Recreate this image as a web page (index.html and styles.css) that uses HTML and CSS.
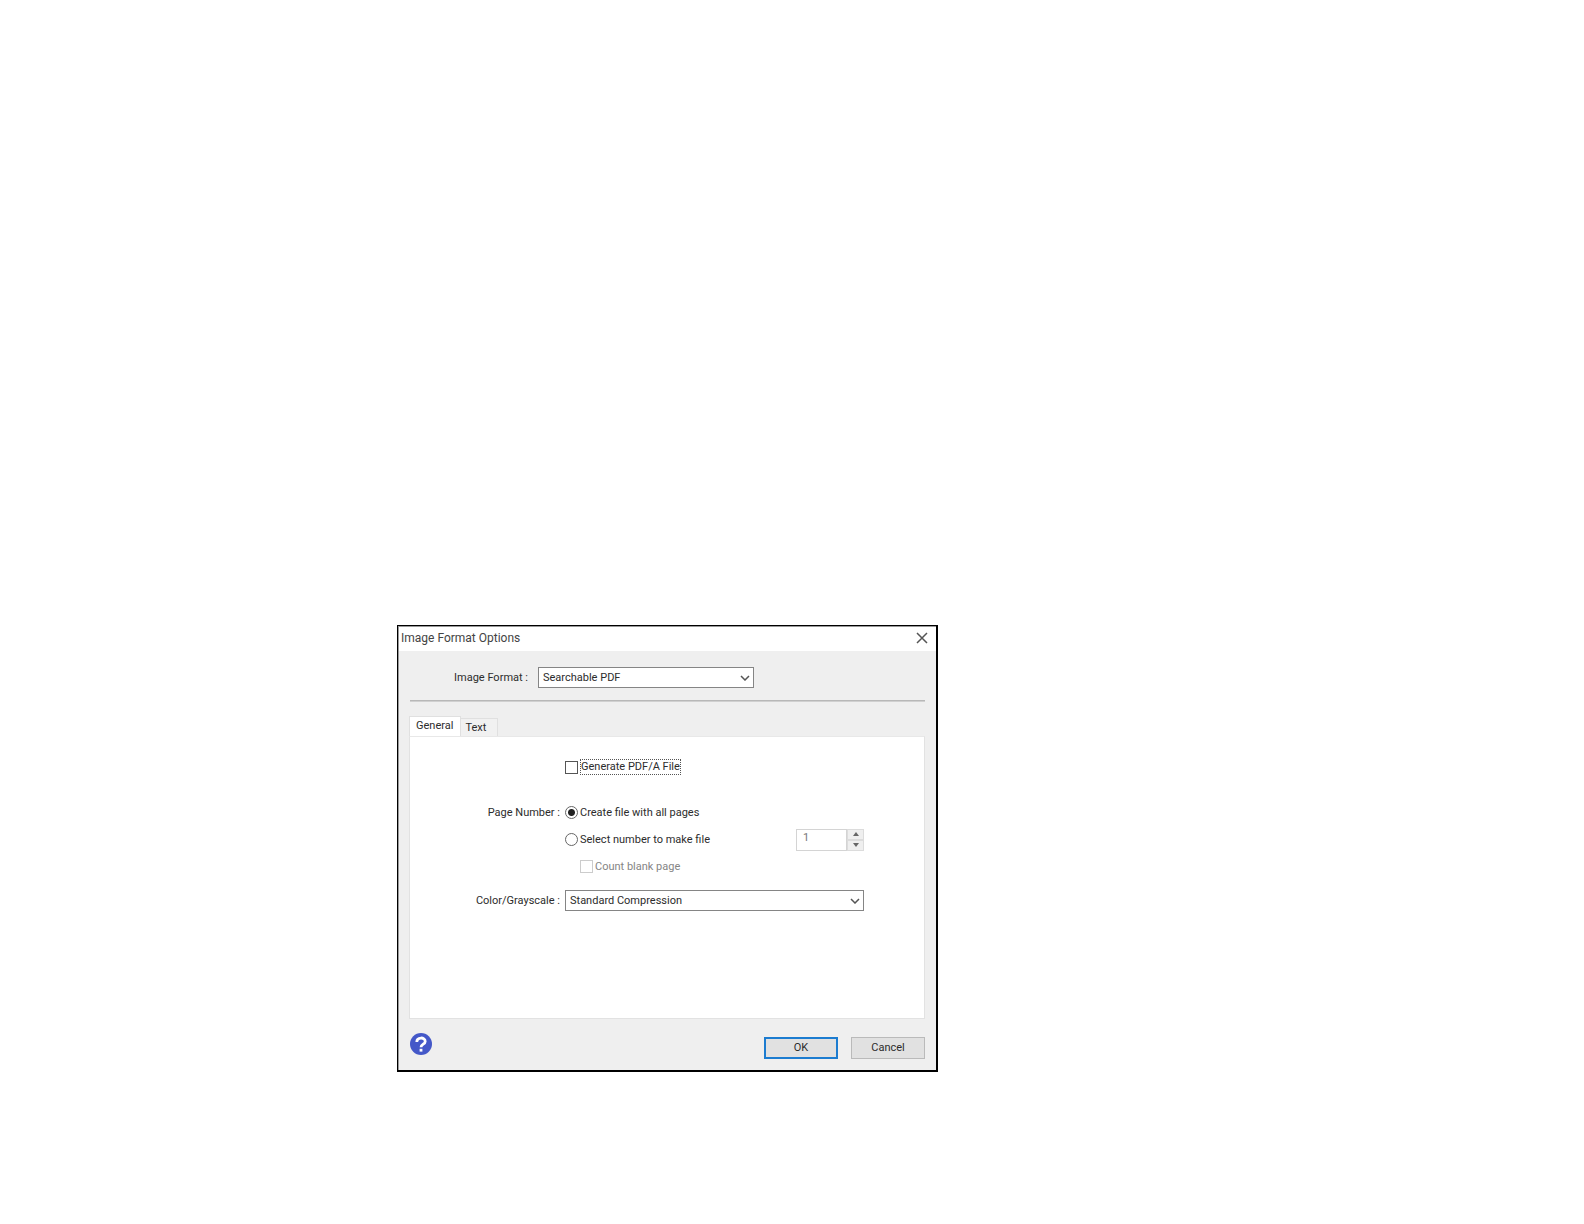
FILE: index.html
```html
<!DOCTYPE html>
<html lang="en">
<head>
<meta charset="utf-8">
<title>Image Format Options</title>
<link rel="stylesheet" href="styles.css">
</head>
<body>
<main class="page">
  <form class="dialog" role="dialog" aria-labelledby="dialog-title">
    <header class="titlebar">
      <h1 class="title" id="dialog-title">Image Format Options</h1>
      <button class="close" type="button" aria-label="Close">
        <svg width="12" height="12" viewBox="0 0 12 12"><path d="M1 1 11 11M11 1 1 11"/></svg>
      </button>
    </header>

    <div class="body">
      <div class="format-row">
        <label class="format-label" for="format">Image Format :</label>
        <div class="dropdown">
          <select id="format"><option>Searchable PDF</option></select>
          <svg class="chevron" width="10" height="6" viewBox="0 0 10 6"><path d="M1 1 5 5 9 1"/></svg>
        </div>
      </div>
      <hr class="divider">

      <div class="tabs" role="tablist">
        <button class="tab active" type="button" role="tab" aria-selected="true">General</button>
        <button class="tab" type="button" role="tab" aria-selected="false">Text</button>
      </div>

      <section class="panel" role="tabpanel">
        <div class="row row-pdfa">
          <span></span>
          <div class="option">
            <input class="check" type="checkbox" id="pdfa">
            <label class="focused" for="pdfa">Generate PDF/A File</label>
          </div>
        </div>
        <div class="row">
          <span class="row-label">Page Number :</span>
          <div class="option">
            <input class="radio" type="radio" name="pages" id="all" checked>
            <label for="all">Create file with all pages</label>
          </div>
        </div>
        <div class="row">
          <span></span>
          <div class="option">
            <input class="radio" type="radio" name="pages" id="some">
            <label for="some">Select number to make file</label>
            <div class="spinner">
              <input class="spin-value" type="text" value="1" aria-label="Number of pages" disabled>
              <button class="spin" type="button" aria-label="Increase" disabled><svg width="6" height="4" viewBox="0 0 6 4"><path d="M0 4 3 0 6 4Z"/></svg></button>
              <button class="spin" type="button" aria-label="Decrease" disabled><svg width="6" height="4" viewBox="0 0 6 4"><path d="M0 0 3 4 6 0Z"/></svg></button>
            </div>
          </div>
        </div>
        <div class="row">
          <span></span>
          <div class="option nested">
            <input class="check" type="checkbox" id="blank" disabled>
            <label for="blank">Count blank page</label>
          </div>
        </div>
        <div class="row row-color">
          <label class="row-label" for="color">Color/Grayscale :</label>
          <div class="dropdown">
            <select id="color"><option>Standard Compression</option></select>
            <svg class="chevron" width="10" height="6" viewBox="0 0 10 6"><path d="M1 1 5 5 9 1"/></svg>
          </div>
        </div>
      </section>

      <footer class="footer">
        <button class="help" type="button" aria-label="Help">
          <svg width="22" height="22" viewBox="0 0 22 22"><circle cx="11" cy="11" r="11" fill="#4458c8"/><path d="M6.8 9C6.8 3.8 15.2 3.8 15.2 8.4 15.2 11.2 11 11 11 14.2" fill="none" stroke="#fff" stroke-width="2.8"/><rect x="9.6" y="15.8" width="2.8" height="2.8" fill="#fff"/></svg>
        </button>
        <button class="button default" type="submit">OK</button>
        <button class="button" type="button">Cancel</button>
      </footer>
    </div>
  </form>
</main>
</body>
</html>
```
FILE: styles.css
```css
* { box-sizing: border-box; }

body {
  margin: 0;
  background: #fff;
  color: #2c2c2c;
  font: 11px/16px Roboto, "Open Sans", sans-serif;
}

button, input, select {
  margin: 0;
  padding: 0;
  border: 0;
  color: inherit;
  font: inherit;
}

svg { display: block; }

.page { padding: 625px 16px 152px 397px; }

.dialog {
  max-width: 541px;
  padding: 1px 0 0 1px;
  border: solid #000;
  border-width: 1px 2px 2px 1px;
  background: #999;
}

.titlebar {
  display: flex;
  align-items: center;
  justify-content: space-between;
  height: 24px;
  padding: 0 8px 2px 2px;
  background: #fff;
}

.title {
  margin: 0;
  color: #444;
  font-size: 12px;
  font-weight: 400;
}

.close { background: none; }

.close path, .chevron path {
  fill: none;
  stroke: #555;
  stroke-width: 1.5;
}

.body {
  padding: 16px 11px 11px 10px;
  background: #efefef;
}

.format-row {
  display: grid;
  grid-template-columns: 119px 216px;
  column-gap: 10px;
  align-items: center;
}

.format-label, .row-label { text-align: right; }

.dropdown {
  display: grid;
  align-items: center;
}

.dropdown select, .chevron { grid-area: 1 / 1; }

.dropdown select {
  appearance: none;
  height: 21px;
  padding: 0 24px 0 4px;
  border: 1px solid #858585;
  background: #fff;
}

.chevron {
  justify-self: end;
  margin-right: 4px;
  pointer-events: none;
}

.divider {
  height: 2px;
  margin: 12px 0 14px 1px;
  border: 0;
  border-top: 1px solid #b8b8b8;
  background: #d0d0d0;
}

.tabs {
  display: flex;
  align-items: flex-end;
}

.tab {
  height: 18px;
  padding: 0 11px 0 4px;
  border: 1px solid #e0e0e0;
  border-width: 1px 1px 0 0;
  background: #f1f1f1;
}

.tab.active {
  height: 20px;
  padding: 0 7px 2px 6px;
  border-left-width: 1px;
  background: #fff;
}

.panel {
  display: flex;
  flex-direction: column;
  min-height: 283px;
  padding: 22px 60px 0 0;
  border: 1px solid #e2e2e2;
  border-top-color: #e8e8e8;
  background: #fff;
}

.row {
  display: grid;
  grid-template-columns: 150px 1fr;
  column-gap: 5px;
  align-items: center;
  min-height: 27px;
}

.row-pdfa { min-height: 16px; margin-bottom: 24px; }
.row-color { min-height: 21px; margin-top: 10px; }

.option {
  display: flex;
  align-items: center;
  gap: 2px;
}

.option.nested {
  padding-left: 15px;
  color: #858585;
}

.focused {
  height: 16px;
  line-height: 14px;
  border: 1px dotted #555;
}

.check, .radio {
  appearance: none;
  width: 13px;
  height: 13px;
  border: 1px solid #555;
  background: #fff;
}

.check:disabled { border-color: #ccc; }

.radio {
  border-color: #666;
  border-radius: 50%;
}

.radio:checked {
  background: radial-gradient(circle, #222 3px, #fff 4px);
}

.spinner {
  display: grid;
  grid-template: 11px 11px / 51px 17px;
  margin-left: auto;
}

.spin-value {
  grid-row: 1 / 3;
  width: 51px;
  padding: 0 6px 3px;
  border: 1px solid #d4d4d4;
  background: #fff;
  color: #777;
}

.spin {
  display: grid;
  place-items: center;
  border: 1px solid #dcdcdc;
  background: #efefef;
}

.spin path { fill: #666; }

.footer {
  display: flex;
  align-items: center;
  gap: 13px;
  margin-top: 13px;
}

.help {
  margin: 0 auto 4px 1px;
  background: none;
}

.button {
  width: 74px;
  height: 22px;
  margin-top: 5px;
  border: 1px solid #bababa;
  background: #e1e1e1;
}

.button.default { border: 2px solid #1c7cd0; }
```
